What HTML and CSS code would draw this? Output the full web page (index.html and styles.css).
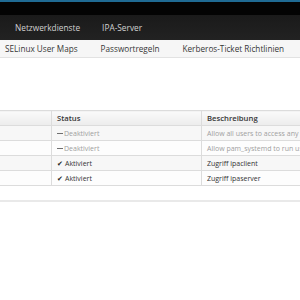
FILE: index.html
```html
<!DOCTYPE html>
<html lang="de">
<head>
  <meta charset="UTF-8">
  <meta name="viewport" content="width=device-width, initial-scale=1">
  <title>Identity Management</title>
  <link rel="stylesheet" href="styles.css">
</head>
<body>

  <header class="masthead">
    <div class="brand-bar"></div>
    <nav class="primary-nav">
      <a class="nav-item">Netzwerkdienste</a>
      <a class="nav-item">IPA-Server</a>
    </nav>
  </header>

  <nav class="secondary-nav">
    <a class="sub-item">SELinux User Maps</a>
    <a class="sub-item">Passwortregeln</a>
    <a class="sub-item">Kerberos-Ticket Richtlinien</a>
  </nav>

  <main class="content">
    <table class="grid">
      <thead>
        <tr>
          <th class="col-name"></th>
          <th class="col-status">Status</th>
          <th class="col-desc">Beschreibung</th>
        </tr>
      </thead>
      <tbody>
        <tr class="disabled">
          <td></td>
          <td><span class="icon-off"></span>Deaktiviert</td>
          <td>Allow all users to access any host from any host</td>
        </tr>
        <tr class="disabled">
          <td></td>
          <td><span class="icon-off"></span>Deaktiviert</td>
          <td>Allow pam_systemd to run user@.service to create a system user session</td>
        </tr>
        <tr>
          <td></td>
          <td><span class="icon-on">&#10004;</span>Aktiviert</td>
          <td>Zugriff ipaclient</td>
        </tr>
        <tr>
          <td></td>
          <td><span class="icon-on">&#10004;</span>Aktiviert</td>
          <td>Zugriff ipaserver</td>
        </tr>
      </tbody>
    </table>
    <div class="grid-footer"></div>
  </main>

</body>
</html>
```

FILE: styles.css
```css
body {
  margin: 0;
  width: 300px;
  overflow: hidden;
  font-family: "Open Sans", sans-serif;
  background: #fff;
  color: #333;
}

.masthead {
  background: #1d1d1d;
  border-top: 2px solid #1f6a93;
}

.brand-bar {
  height: 13px;
  background: #030303;
}

.primary-nav {
  display: flex;
  gap: 22px;
  height: 25px;
  align-items: center;
  padding-left: 15px;
  background: linear-gradient(#1a1a1a, #222);
}

.nav-item {
  color: #d1d1d1;
  font-size: 8.3px;
  white-space: nowrap;
}

.secondary-nav {
  display: flex;
  gap: 23px;
  height: 17px;
  align-items: center;
  padding-left: 5px;
  background: #f6f6f6;
  border-bottom: 1px solid #e2e2e2;
  white-space: nowrap;
}

.sub-item {
  color: #363636;
  font-size: 8.2px;
}

.content {
  padding-top: 52px;
}

.grid {
  border-collapse: collapse;
  width: 300px;
  table-layout: fixed;
  font-size: 7px;
}

.grid th,
.grid td {
  height: 14px;
  padding: 0 0 0 5px;
  border: 1px solid #dcdcdc;
  border-left: 0;
  border-right: 0;
  white-space: nowrap;
  overflow: hidden;
  text-align: left;
}

.grid td + td,
.grid th + th {
  border-left: 1px solid #dcdcdc;
}

.grid th {
  background: linear-gradient(#fafafa, #ececec);
  font-size: 7.7px;
  font-weight: 600;
  color: #363636;
}

.col-name {
  width: 46px;
}

.col-status {
  width: 144px;
}

.grid tbody tr:nth-child(odd) {
  background: #f7f7f7;
}

.grid tbody tr:nth-child(even) {
  background: #fdfdfd;
}

.grid tr.disabled td {
  color: #a0a0a0;
}

.icon-off {
  display: inline-block;
  width: 6px;
  height: 1.5px;
  margin-right: 1px;
  vertical-align: middle;
  background: #6f6f6f;
}

.icon-on {
  display: inline-block;
  width: 8px;
  font-size: 7px;
  color: #222;
}

.grid-footer {
  height: 14px;
  border-bottom: 2px solid #e9e9e9;
}
```
